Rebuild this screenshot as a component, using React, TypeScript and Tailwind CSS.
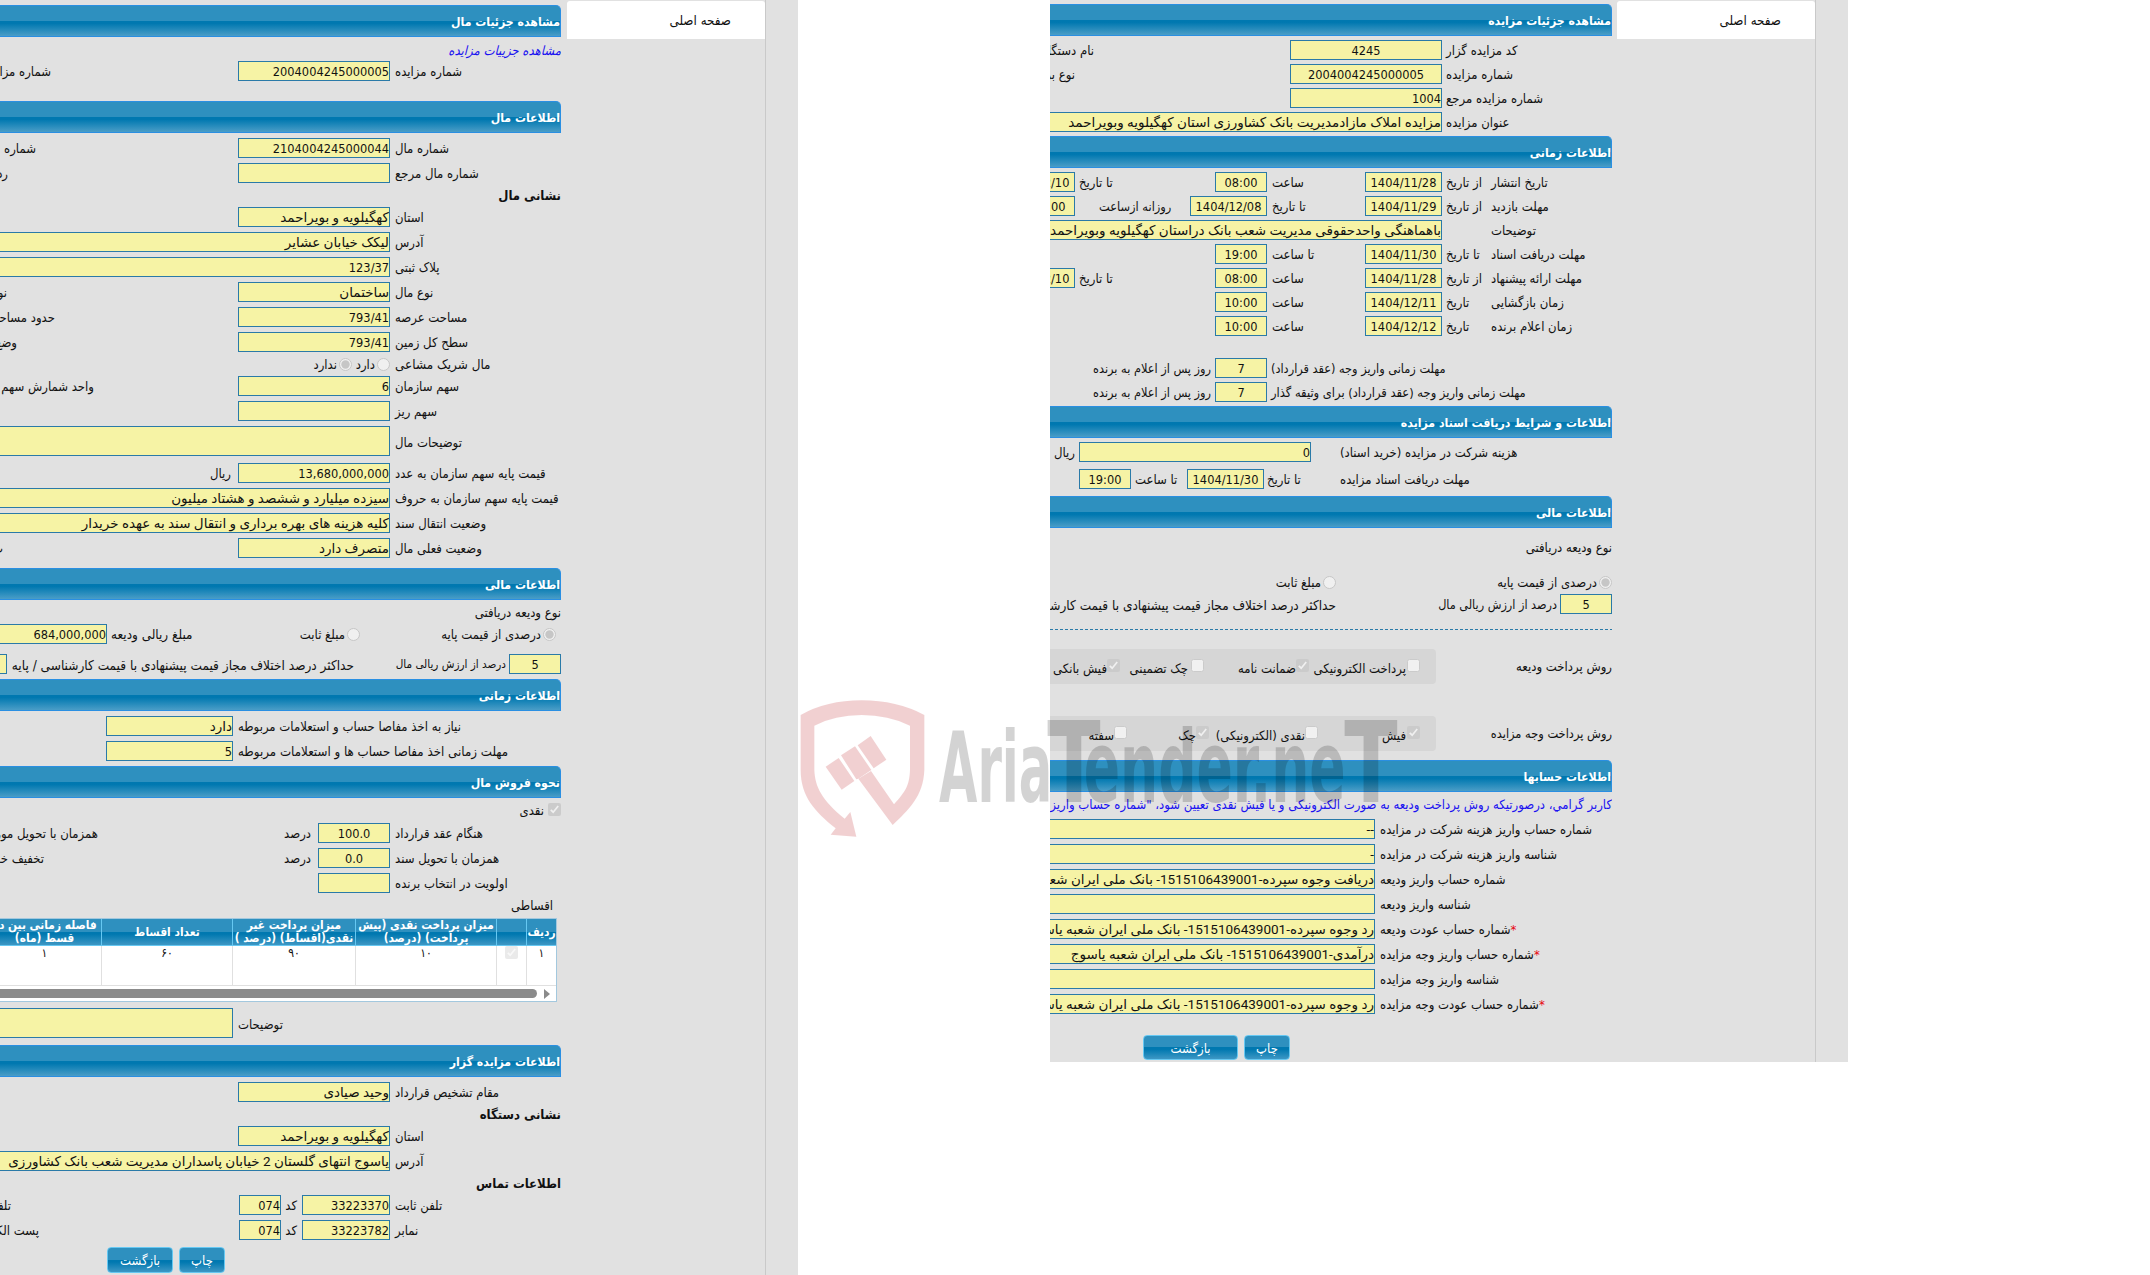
import type { ReactNode } from 'react'
import clsx from 'clsx'

type BoxProps = { children?: ReactNode; className?: string }

function Bar({ children, className }: BoxProps) {
  return (
    <h2
      className={clsx(
        'flex h-8 shrink-0 items-center rounded-tr-[5px] border border-l-0 border-[#2a8fe2] bg-[linear-gradient(#2e90bf_0%,#2e90bf_50%,#0078b0_50%,#0078b0_58%,#4a9dc7_100%)] pt-0.5 text-[12.2px] font-bold text-white',
        className,
      )}
    >
      {children}
    </h2>
  )
}

function Group({ children, className }: BoxProps) {
  return <div className={clsx('flex shrink-0 flex-col', className)}>{children}</div>
}

function Row({ children, className }: BoxProps) {
  return <div className={clsx('flex h-5 shrink-0 items-center', className)}>{children}</div>
}

function Label({ children, className }: BoxProps) {
  return <span className={clsx('shrink-0 pt-0.5', className)}>{children}</span>
}

// numeric read-only value
function Num({ children, className }: BoxProps) {
  return (
    <span className={clsx('flex h-5 shrink-0 items-center border border-[#2a7aa8] bg-[#f6f3a5] pt-px text-[12.7px]', className)}>
      {children}
    </span>
  )
}

// text read-only value
function Field({ children, className }: BoxProps) {
  return (
    <span
      className={clsx(
        "flex shrink-0 items-center border border-[#2a7aa8] bg-[#f6f3a5] pt-px font-['Roboto','DejaVu_Sans',sans-serif] text-[13.5px] [font-stretch:normal]",
        className,
      )}
    >
      {children}
    </span>
  )
}

function Check({ checked, className }: { checked?: boolean; className?: string }) {
  return (
    <svg viewBox="0 0 13 13" className={clsx('h-[13px] w-[13px] shrink-0', className)}>
      {checked ? (
        <>
          <rect width="13" height="13" rx="2" fill="#cbcbcb" />
          <path d="M2.8 6.8 5.2 9.2 10.2 3" fill="none" stroke="#f0f0f0" strokeWidth="1.7" />
        </>
      ) : (
        <rect x=".5" y=".5" width="12" height="12" rx="2" fill="#f1f1f1" stroke="#cbcbcb" />
      )}
    </svg>
  )
}

function Radio({ checked, className }: { checked?: boolean; className?: string }) {
  return (
    <svg viewBox="0 0 13 13" className={clsx('h-[13px] w-[13px] shrink-0', className)}>
      <circle cx="6.5" cy="6.5" r="6" fill="#f0f0f0" stroke="#c6c6c6" />
      {checked && <circle cx="6.5" cy="6.5" r="4.2" fill="#c6c6c6" />}
    </svg>
  )
}

function Button({ children, className }: BoxProps) {
  return (
    <button
      className={clsx(
        'flex shrink-0 items-center justify-center rounded-[4px] border border-[#66c8f2] bg-[linear-gradient(#2e90bf_0%,#2e90bf_50%,#0078b0_50%,#0078b0_58%,#3d97c4_100%)] pt-0.5 text-[13px] text-white',
        className,
      )}
    >
      {children}
    </button>
  )
}

function Tab({ className }: { className?: string }) {
  return (
    <div className={clsx('shrink-0 border-r border-[#c9c9c9]', className)}>
      <div className="mt-px flex h-[38px] w-[198px] items-center rounded-t-[3px] bg-white pt-0.5 pr-[34px] text-[13.3px]">صفحه اصلی</div>
    </div>
  )
}

const labelCell = 'w-[166px] text-left'

function AssetPanel() {
  return (
    <section dir="rtl" className="flex h-[1275px] w-[798px] shrink-0 overflow-hidden bg-[#e1e1e1] pr-8">
      <Tab className="w-[199px]" />
      <div className="mr-1.5 flex w-[561px] shrink-0 flex-col overflow-hidden pt-[5px] whitespace-nowrap">
        <Bar>مشاهده جزئیات مال</Bar>
        <div className="h-6 shrink-0 pt-1.5 leading-4 text-[#1a12f0] italic">مشاهده جزییات مزایده</div>
        <Row>
          <Label className={labelCell}>شماره مزایده</Label>
          <Num className="mr-[5px] w-[152px]">2004004245000005</Num>
          <Label className="mr-[187px]">شماره مزایده</Label>
        </Row>

        <Bar className="mt-5">اطلاعات مال</Bar>
        <Group className="mt-[5px] gap-[5px]">
          <Row>
            <Label className={labelCell}>شماره مال</Label>
            <Num className="mr-[5px] w-[152px]">2104004245000044</Num>
            <Label className="mr-[202px]">شماره</Label>
          </Row>
          <Row>
            <Label className={labelCell}>شماره مال مرجع</Label>
            <Field className="mr-[5px] h-5 w-[152px]" />
            <Label className="mr-[230px]">رد</Label>
          </Row>
        </Group>
        <div className="h-6 shrink-0 pt-[3px] font-bold">نشانی مال</div>
        <Group className="gap-[5px]">
          <Row>
            <Label className={labelCell}>استان</Label>
            <Field className="mr-[5px] h-5 w-[152px]">کهگیلویه و بویراحمد</Field>
          </Row>
          <Row>
            <Label className={labelCell}>آدرس</Label>
            <Field className="mr-[5px] h-5 w-[400px]">لیکک خیابان عشایر</Field>
          </Row>
          <Row>
            <Label className={labelCell}>پلاک ثبتی</Label>
            <Num className="mr-[5px] w-[400px]">123/37</Num>
          </Row>
          <Row>
            <Label className={labelCell}>نوع مال</Label>
            <Field className="mr-[5px] h-5 w-[152px]">ساختمان</Field>
            <Label className="mr-[231px]">نو</Label>
          </Row>
          <Row>
            <Label className={labelCell}>مساحت عرصه</Label>
            <Num className="mr-[5px] w-[152px]">793/41</Num>
            <Label className="mr-[183px]">حدود مساحت</Label>
          </Row>
          <Row>
            <Label className={labelCell}>سطح کل زمین</Label>
            <Num className="mr-[5px] w-[152px]">793/41</Num>
            <Label className="mr-[221px]">وضع</Label>
          </Row>
        </Group>
        <Row className="h-6">
          <Label className={clsx(labelCell, 'text-[13.4px]')}>مال شریک مشاعی</Label>
          <Radio className="mr-[5px]" />
          <Label className="mr-0.5 w-[19px]">دارد</Label>
          <Radio checked className="mr-1" />
          <Label className="mr-0.5">ندارد</Label>
        </Row>
        <Group className="gap-[5px]">
          <Row>
            <Label className={labelCell}>سهم سازمان</Label>
            <Num className="mr-[5px] w-[152px]">6</Num>
            <Label className="mr-[144px]">واحد شمارش سهم</Label>
          </Row>
          <Row>
            <Label className={labelCell}>سهم ریز</Label>
            <Field className="mr-[5px] h-5 w-[152px]" />
          </Row>
          <Row className="h-[30px]">
            <Label className={clsx(labelCell, 'pt-1')}>توضیحات مال</Label>
            <Field className="mr-[5px] h-[30px] w-[400px]" />
          </Row>
        </Group>
        <Group className="mt-[7px] gap-[5px]">
          <Row>
            <Label className={labelCell}>قیمت پایه سهم سازمان به عدد</Label>
            <Num className="mr-[5px] w-[152px]">13,680,000,000</Num>
            <Label className="mr-[7px]">ریال</Label>
          </Row>
          <Row>
            <Label className={labelCell}>قیمت پایه سهم سازمان به حروف</Label>
            <Field className="mr-[5px] h-5 w-[400px]">سیزده میلیارد و ششصد و هشتاد میلیون</Field>
          </Row>
          <Row>
            <Label className={labelCell}>وضعیت انتقال سند</Label>
            <Field className="mr-[5px] h-5 w-[400px]">کلیه هزینه های بهره برداری و انتقال سند به عهده خریدار</Field>
          </Row>
          <Row>
            <Label className={labelCell}>وضعیت فعلی مال</Label>
            <Field className="mr-[5px] h-5 w-[152px]">متصرف دارد</Field>
            <Label className="mr-[235px]">ت</Label>
          </Row>
        </Group>

        <Bar className="mt-2.5">اطلاعات مالی</Bar>
        <div className="h-6 shrink-0 pt-[3px]">نوع ودیعه دریافتی</div>
        <Row>
          <Radio checked className="mr-[5px]" />
          <Label className="mr-0.5 w-[181px]">درصدی از قیمت پایه</Label>
          <Radio />
          <Label className="mr-0.5 w-[152px]">مبلغ ثابت</Label>
          <Label className="w-[82px] text-left text-[13.4px]">مبلغ ریالی ودیعه</Label>
          <Num className="mr-1 w-[120px]">684,000,000</Num>
        </Row>
        <Row className="mt-2.5">
          <Num className="w-[52px] justify-center">5</Num>
          <Label className="mr-[3px] w-[152px] text-[11.6px]">درصد از ارزش ریالی مال</Label>
          <Label className="w-[342px] text-[13.5px]">حداکثر درصد اختلاف مجاز قیمت پیشنهادی با قیمت کارشناسی / پایه</Label>
          <Num className="mr-[5px] w-[52px]" />
        </Row>

        <Bar className="mt-[5px]">اطلاعات زمانی</Bar>
        <Group className="mt-[5px] gap-[5px]">
          <Row>
            <Label className="w-[323px] text-left">نیاز به اخذ مفاصا حساب و استعلامات مربوطه</Label>
            <Field className="mr-[5px] h-5 w-[127px]">دارد</Field>
          </Row>
          <Row>
            <Label className="w-[323px] text-left text-[13.2px]">مهلت زمانی اخذ مفاصا حساب ها و استعلامات مربوطه</Label>
            <Num className="mr-[5px] w-[127px]">5</Num>
          </Row>
        </Group>

        <Bar className="mt-[5px]">نحوه فروش مال</Bar>
        <Row className="h-[25px] pb-0.5">
          <Check checked />
          <Label className="mr-1">نقدی</Label>
        </Row>
        <Group className="gap-[5px]">
          <Row>
            <Label className={labelCell}>هنگام عقد قرارداد</Label>
            <Num className="mr-[5px] w-[72px] justify-center">100.0</Num>
            <Label className="mr-[7px] w-[213px]">درصد</Label>
            <Label>همزمان با تحویل مورد</Label>
          </Row>
          <Row>
            <Label className={labelCell}>همزمان با تحویل سند</Label>
            <Num className="mr-[5px] w-[72px] justify-center">0.0</Num>
            <Label className="mr-[7px] w-[267px]">درصد</Label>
            <Label>تخفیف خرید</Label>
          </Row>
          <Row>
            <Label className={labelCell}>اولویت در انتخاب برنده</Label>
            <Num className="mr-[5px] w-[72px]" />
          </Row>
        </Group>
        <div className="h-[25px] shrink-0 pt-[3px] pr-2">اقساطی</div>

        <div className="mr-1 flex h-[84px] w-[700px] shrink-0 flex-col border border-[#a3c8de] bg-white">
          <div className="grid h-[27px] shrink-0 grid-cols-[30px_30px_141px_123px_131px_113px] divide-x divide-[#66c8f2] border-b border-[#66c8f2] bg-[linear-gradient(#2e90bf_0%,#2e90bf_50%,#0078b0_50%,#0078b0_58%,#3d97c4_100%)] text-center text-[11.8px] leading-[13px] font-bold text-white *:flex *:items-center *:justify-center">
            <span>ردیف</span>
            <span />
            <span>میزان پرداخت نقدی (پیش<br />پرداخت) (درصد)</span>
            <span>میزان پرداخت غیر<br />نقدی(اقساط) (درصد )</span>
            <span>تعداد اقساط</span>
            <span>فاصله زمانی بین دو<br />قسط (ماه)</span>
          </div>
          <div className="grid h-10 shrink-0 grid-cols-[30px_30px_141px_123px_131px_113px] divide-x divide-[#e0e0e0] border-b border-[#e0e0e0] text-center text-[12px] leading-[14px] *:flex *:justify-center">
            <span>۱</span>
            <span><Check checked className="opacity-40" /></span>
            <span>۱۰</span>
            <span>۹۰</span>
            <span>۶۰</span>
            <span>۱</span>
          </div>
          <div className="flex h-[15px] items-center pr-1.5">
            <svg viewBox="0 0 6 10" className="h-2.5 w-[6px]">
              <path d="M0 0 6 5 0 10Z" fill="#8b8b8b" />
            </svg>
            <div className="mr-[7px] h-[9px] w-[600px] rounded-full bg-[#8b8b8b]" />
          </div>
        </div>

        <Row className="mt-1.5 h-[30px]">
          <Label className="w-[323px] pt-1 text-left">توضیحات</Label>
          <Field className="mr-[5px] h-[30px] w-[300px]" />
        </Row>

        <Bar className="mt-[7px]">اطلاعات مزایده گزار</Bar>
        <Row className="mt-[5px]">
          <Label className={labelCell}>مقام تشخیص قرارداد</Label>
          <Field className="mr-[5px] h-5 w-[152px]">وحید صیادی</Field>
        </Row>
        <div className="h-6 shrink-0 pt-[3px] font-bold">نشانی دستگاه</div>
        <Group className="gap-[5px]">
          <Row>
            <Label className={labelCell}>استان</Label>
            <Field className="mr-[5px] h-5 w-[152px]">کهگیلویه و بویراحمد</Field>
          </Row>
          <Row>
            <Label className={labelCell}>آدرس</Label>
            <Field className="mr-[5px] h-5 w-[400px]">یاسوج انتهای گلستان 2 خیابان پاسداران مدیریت شعب بانک کشاورزی</Field>
          </Row>
        </Group>
        <div className="h-6 shrink-0 pt-[3px] font-bold">اطلاعات تماس</div>
        <Group className="gap-[5px]">
          <Row>
            <Label className={labelCell}>تلفن ثابت</Label>
            <Num className="mr-[5px] w-[88px]">33223370</Num>
            <Label className="mr-[5px] w-[13px]">کد</Label>
            <Num className="mr-[3px] w-[42px]">074</Num>
            <Label className="mr-[228px]">تلفن</Label>
          </Row>
          <Row>
            <Label className={labelCell}>نمابر</Label>
            <Num className="mr-[5px] w-[88px]">33223782</Num>
            <Label className="mr-[5px] w-[13px]">کد</Label>
            <Num className="mr-[3px] w-[42px]">074</Num>
            <Label className="mr-[200px]">پست الکترونیک</Label>
          </Row>
        </Group>
        <div className="mt-[7px] mr-[336px] flex shrink-0 gap-[6px]">
          <Button className="h-[26px] w-[46px]">چاپ</Button>
          <Button className="h-[26px] w-[66px]">بازگشت</Button>
        </div>
      </div>
    </section>
  )
}

const accounts = [
  { label: 'شماره حساب واریز هزینه شرکت در مزایده', value: '--' },
  { label: 'شناسه واریز هزینه شرکت در مزایده', value: '-' },
  { label: 'شماره حساب واریز ودیعه', value: 'دریافت وجوه سپرده-1515106439001- بانک ملی ایران شعبه یاسوج' },
  { label: 'شناسه واریز ودیعه', value: '' },
  { label: 'شماره حساب عودت ودیعه', value: 'رد وجوه سپرده-1515106439001- بانک ملی ایران شعبه یاسوج', required: true },
  { label: 'شماره حساب واریز وجه مزایده', value: 'درآمدی-1515106439001- بانک ملی ایران شعبه یاسوج', required: true },
  { label: 'شناسه واریز وجه مزایده', value: '' },
  { label: 'شماره حساب عودت وجه مزایده', value: 'رد وجوه سپرده-1515106439001- بانک ملی ایران شعبه یاسوج', required: true },
]

const timeLabel = 'w-[121px] text-left'
const hourLabel = 'mr-1 w-[89px] text-left'

function AuctionPanel() {
  return (
    <section dir="rtl" className="flex h-[1062px] w-[798px] shrink-0 overflow-hidden bg-[#e1e1e1] pr-8">
      <Tab className="w-[199px]" />
      <div className="mr-[5px] flex w-[562px] shrink-0 flex-col overflow-hidden pt-1 whitespace-nowrap">
        <Bar>مشاهده جزئیات مزایده</Bar>
        <Group className="mt-1 gap-1">
          <Row>
            <Label className={labelCell}>کد مزایده گزار</Label>
            <Num className="mr-1 w-[152px] justify-center">4245</Num>
            <Label className="mr-[196px]">نام دستگاه</Label>
          </Row>
          <Row>
            <Label className={labelCell}>شماره مزایده</Label>
            <Num className="mr-1 w-[152px] justify-center">2004004245000005</Num>
            <Label className="mr-[215px]">نوع برگزاری</Label>
          </Row>
          <Row>
            <Label className={labelCell}>شماره مزایده مرجع</Label>
            <Num className="mr-1 w-[152px]">1004</Num>
          </Row>
          <Row>
            <Label className={labelCell}>عنوان مزایده</Label>
            <Field className="mr-1 h-5 w-[400px]">مزایده املاک مازادمدیریت بانک کشاورزی استان کهگیلویه وبویراحمد</Field>
          </Row>
        </Group>

        <Bar className="mt-1">اطلاعات زمانی</Bar>
        <Group className="mt-1 gap-1">
          <Row>
            <Label className={timeLabel}>تاریخ انتشار</Label>
            <Label className="w-[45px] text-left">از تاریخ</Label>
            <Num className="mr-1 w-[77px] justify-center">1404/11/28</Num>
            <Label className={hourLabel}>ساعت</Label>
            <Num className="mr-[5px] w-[52px] justify-center">08:00</Num>
            <Label className="w-[136px] text-left">تا تاریخ</Label>
            <Num className="mr-1 w-[77px] justify-center">1404/12/10</Num>
          </Row>
          <Row>
            <Label className={timeLabel}>مهلت بازدید</Label>
            <Label className="w-[45px] text-left">از تاریخ</Label>
            <Num className="mr-1 w-[77px] justify-center">1404/11/29</Num>
            <Label className={hourLabel}>تا تاریخ</Label>
            <Num className="mr-[5px] w-[77px] justify-center">1404/12/08</Num>
            <Label className="w-[91px] text-left text-[12.7px]">روزانه ازساعت</Label>
            <Num className="mr-6 w-[52px] justify-center">08:00</Num>
          </Row>
          <Row>
            <Label className={timeLabel}>توضیحات</Label>
            <Field className="mr-[49px] h-5 w-[400px]">باهماهنگی واحدحقوقی مدیریت شعب بانک دراستان کهگیلویه وبویراحمد</Field>
          </Row>
          <Row>
            <Label className={timeLabel}>مهلت دریافت اسناد</Label>
            <Label className="w-[45px] text-left">تا تاریخ</Label>
            <Num className="mr-1 w-[77px] justify-center">1404/11/30</Num>
            <Label className={hourLabel}>تا ساعت</Label>
            <Num className="mr-[5px] w-[52px] justify-center">19:00</Num>
          </Row>
          <Row>
            <Label className={timeLabel}>مهلت ارائه پیشنهاد</Label>
            <Label className="w-[45px] text-left">از تاریخ</Label>
            <Num className="mr-1 w-[77px] justify-center">1404/11/28</Num>
            <Label className={hourLabel}>ساعت</Label>
            <Num className="mr-[5px] w-[52px] justify-center">08:00</Num>
            <Label className="w-[136px] text-left">تا تاریخ</Label>
            <Num className="mr-1 w-[77px] justify-center">1404/12/10</Num>
          </Row>
          <Row>
            <Label className={timeLabel}>زمان بازگشایی</Label>
            <Label className="w-[45px] text-left">تاریخ</Label>
            <Num className="mr-1 w-[77px] justify-center">1404/12/11</Num>
            <Label className={hourLabel}>ساعت</Label>
            <Num className="mr-[5px] w-[52px] justify-center">10:00</Num>
          </Row>
          <Row>
            <Label className={timeLabel}>زمان اعلام برنده</Label>
            <Label className="w-[45px] text-left">تاریخ</Label>
            <Num className="mr-1 w-[77px] justify-center">1404/12/12</Num>
            <Label className={hourLabel}>ساعت</Label>
            <Num className="mr-[5px] w-[52px] justify-center">10:00</Num>
          </Row>
        </Group>
        <Group className="mt-[22px] gap-1 text-[12.6px]">
          <Row>
            <Label className="w-[341px] text-left">مهلت زمانی واریز وجه (عقد قرارداد)</Label>
            <Num className="mr-1 w-[52px] justify-center">7</Num>
            <Label className="mr-1">روز پس از اعلام به برنده</Label>
          </Row>
          <Row>
            <Label className="w-[341px] text-left text-[12.8px]">مهلت زمانی واریز وجه (عقد قرارداد) برای وثیقه گذار</Label>
            <Num className="mr-1 w-[52px] justify-center">7</Num>
            <Label className="mr-1">روز پس از اعلام به برنده</Label>
          </Row>
        </Group>

        <Bar className="mt-1">اطلاعات و شرایط دریافت اسناد مزایده</Bar>
        <Row className="mt-1">
          <Label className="w-[272px] text-left">هزینه شرکت در مزایده (خرید اسناد)</Label>
          <Num className="mr-[29px] w-[232px]">0</Num>
          <Label className="mr-1">ریال</Label>
        </Row>
        <Row className="mt-[7px]">
          <Label className="w-[272px] text-left">مهلت دریافت اسناد مزایده</Label>
          <Label className="w-[73px] text-left">تا تاریخ</Label>
          <Num className="mr-[3px] w-[77px] justify-center">1404/11/30</Num>
          <Label className="w-[52px] text-left">تا ساعت</Label>
          <Num className="mr-1 w-[52px] justify-center">19:00</Num>
        </Row>

        <Bar className="mt-[7px]">اطلاعات مالی</Bar>
        <Row className="h-[42px] pb-0.5">نوع ودیعه دریافتی</Row>
        <Row className="h-6">
          <Radio checked />
          <Label className="mr-0.5 w-[261px]">درصدی از قیمت پایه</Label>
          <Radio />
          <Label className="mr-0.5">مبلغ ثابت</Label>
        </Row>
        <Row>
          <Num className="w-[52px] justify-center">5</Num>
          <Label className="mr-[3px] w-[221px] text-[12.5px]">درصد از ارزش ریالی مال</Label>
          <Label className="text-[13.5px]">حداکثر درصد اختلاف مجاز قیمت پیشنهادی با قیمت کارشناسی / پایه</Label>
        </Row>
        <div className="mt-[15px] mb-[19px] h-px shrink-0 bg-[repeating-linear-gradient(90deg,#2a7aa8_0_3px,transparent_3px_5px)]" />

        <div className="flex h-[35px] shrink-0">
          <Label className="w-44 pt-2">روش پرداخت ودیعه</Label>
          <div className="flex w-[420px] shrink-0 rounded-r-[4px] bg-[#d6d6d6] pt-2.5 pr-4">
            <Check />
            <Label className="mr-px -mt-0.5 w-[97px]">پرداخت الکترونیکی</Label>
            <Check checked />
            <Label className="-mt-0.5 w-[92px]">ضمانت نامه</Label>
            <Check />
            <Label className="mr-[3px] -mt-0.5 w-[68px]">چک تضمینی</Label>
            <Check checked />
            <Label className="-mt-0.5">فیش بانکی</Label>
          </div>
        </div>
        <div className="mt-8 flex h-[35px] shrink-0">
          <Label className="w-44 pt-2 text-[12.7px]">روش پرداخت وجه مزایده</Label>
          <div className="flex w-[420px] shrink-0 rounded-r-[4px] bg-[#d6d6d6] pt-2.5 pr-4">
            <Check checked />
            <Label className="mr-px -mt-0.5 w-[88px]">فیش</Label>
            <Check />
            <Label className="-mt-0.5 w-24">نقدی (الکترونیکی)</Label>
            <Check checked />
            <Label className="-mt-0.5 w-[69px]">چک</Label>
            <Check />
            <Label className="-mt-0.5">سفته</Label>
          </div>
        </div>

        <Bar className="mt-[9px]">اطلاعات حسابها</Bar>
        <Row className="h-[27px] pb-0.5 text-[#1a12f0]">کاربر گرامي، درصورتیکه روش پرداخت ودیعه به صورت الکترونیکی و یا فیش نقدی تعیین شود، "شماره حساب واریز ودیعه"</Row>
        <Group className="gap-[5px]">
          {accounts.map(({ label, value, required }) => (
            <Row key={label}>
              <Label className="w-[232px] text-left">
                {required && <span className="text-red-600">*</span>}
                {label}
              </Label>
              <Field className="mr-[5px] h-5 w-[400px]">{value}</Field>
            </Row>
          ))}
        </Group>
        <div className="mt-[21px] mr-[322px] flex shrink-0 gap-[6px]">
          <Button className="h-[25px] w-[46px]">چاپ</Button>
          <Button className="h-[25px] w-[95px]">بازگشت</Button>
        </div>
      </div>
    </section>
  )
}

function Watermark() {
  return (
    <svg viewBox="0 0 1830 465" className="pointer-events-none absolute top-[690px] left-[795px] h-[155px] w-[610px]">
      <g fill="#c1272d" opacity=".21">
        <path d="M17 75Q95 31 200 31T388 75V240C385 320 340 360 293 405L190 266 228 243 297 343C330 305 343 290 345 240V107Q280 75 200 75T58 107V240C60 290 80 330 149 386L166 366 184 440 107 434 122 415C60 365 17 320 17 240Z" />
        <path d="M92 230 131 204 178 273 140 299ZM138 196 180 169 229 240 190 266 184 268ZM188 166 227 138 274 209 236 235Z" />
      </g>
      <g fontFamily="'Liberation Sans Narrow', 'DejaVu Sans Condensed', sans-serif" fontWeight="700" opacity=".17">
        <text x="432" y="336" fontSize="295" textLength="340" lengthAdjust="spacingAndGlyphs">Aria</text>
        <text x="757" y="336" fontSize="335" textLength="160" lengthAdjust="spacingAndGlyphs">T</text>
        <text x="866" y="336" fontSize="300" textLength="786" lengthAdjust="spacingAndGlyphs">ender.ne</text>
        <text x="1648" y="336" fontSize="335" textLength="160" lengthAdjust="spacingAndGlyphs">T</text>
      </g>
    </svg>
  )
}

export default function App() {
  return (
    <div className="relative flex h-[1275px] w-[2150px] items-start gap-[252px] overflow-hidden bg-white font-['DejaVu_Sans_Condensed','DejaVu_Sans',sans-serif] text-[13px] text-[#111] [font-stretch:condensed]">
      <AssetPanel />
      <AuctionPanel />
      <Watermark />
    </div>
  )
}
